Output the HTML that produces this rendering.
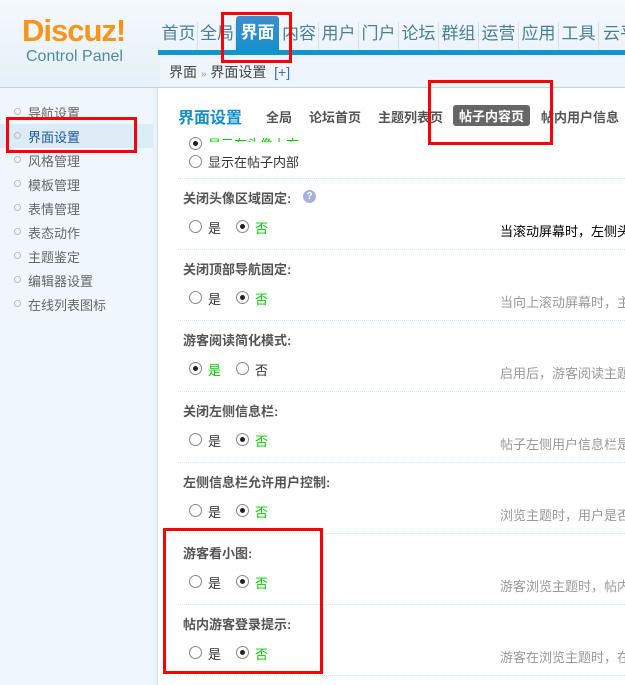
<!DOCTYPE html>
<html><head><meta charset="utf-8"><style>
*{margin:0;padding:0;box-sizing:border-box}
body{width:625px;height:685px;overflow:hidden;position:relative;background:#fff;font-family:"Liberation Sans","Noto Sans CJK SC",sans-serif;font-size:12px;color:#333}
.a{position:absolute;white-space:nowrap}
.hd{left:0;top:0;width:625px;height:88px;background:linear-gradient(#f4f9fd,#e6f0f8)}
.logo{left:22px;top:13px;font-size:31px;font-weight:bold;color:#f7941d;letter-spacing:-1px;font-family:"Liberation Sans",sans-serif}
.cp{left:26px;top:48px;font-size:16px;color:#4f8aa3}
.nav{top:22px;height:28px;font-size:17px;color:#4a7f98;line-height:24px;text-align:center;border-right:1px solid #d2e1ec}
.bar{left:158px;top:50px;width:467px;height:5px;background:#0f97cd}
.bc{left:160px;top:59px;width:465px;height:27px;background:#eef6fc;font-size:14px;color:#444;padding:3px 0 0 9px}
.line{left:0;top:87px;width:625px;height:1px;background:#c3d6e3}
.side{left:0;top:88px;width:153px;height:597px;background:#f0f7fc}
.sb{left:153px;top:88px;width:5px;height:597px;background:#e8f2f9;border-right:1px solid #d0e2ee}
.si{left:28px;font-size:13px;color:#666}
.dot{left:14px;width:7px;height:7px;border:1px solid #bbb;border-radius:50%}
.rb{width:13px;height:13px;border:1px solid #888;border-radius:50%;background:#fff}
.rb.on::after{content:"";position:absolute;left:3px;top:3px;width:5px;height:5px;border-radius:50%;background:#222}
.lbl{left:183px;font-weight:bold;font-size:13px;color:#555}
.sep{left:178px;width:447px;height:0;border-top:1px dotted #d3e3ef}
.desc{left:500px;font-size:13px;color:#999}
.red{position:absolute;border:3px solid #f00}
.tab{top:107px;font-size:13px;font-weight:bold;color:#555}
</style></head><body>
<div class="a hd"></div>
<div class="a logo">Discuz<span style="color:#f7941d">!</span></div>
<div class="a cp">Control Panel</div>
<div class="a nav" style="left:160px;width:38px">首页</div>
<div class="a nav" style="left:199px;width:37px">全局</div>
<div class="a" style="left:236px;top:16px;width:43px;height:34px;background:linear-gradient(#3c8fc9,#1a8fcc);color:#fff;font-size:17px;font-weight:bold;text-align:center;line-height:34px;border-radius:3px 3px 0 0">界面</div>
<div class="a nav" style="left:280px;width:39px">内容</div>
<div class="a nav" style="left:319px;width:40px">用户</div>
<div class="a nav" style="left:359px;width:40px">门户</div>
<div class="a nav" style="left:399px;width:40px">论坛</div>
<div class="a nav" style="left:439px;width:40px">群组</div>
<div class="a nav" style="left:479px;width:40px">运营</div>
<div class="a nav" style="left:519px;width:40px">应用</div>
<div class="a nav" style="left:559px;width:40px">工具</div>
<div class="a nav" style="left:600px;width:40px;border:0">云平</div>
<div class="a bar"></div>
<div class="a bc">界面 <span style="color:#999;font-size:10px">»</span> 界面设置 &nbsp;<span style="color:#3a6fb0">[+]</span></div>
<div class="a line"></div>
<div class="a side"></div>
<div class="a sb"></div>
<div class="a" style="left:0;top:124px;width:153px;height:24px;background:#dcebf6"></div>
<div class="a dot" style="top:108px"></div><div class="a si" style="top:103px">导航设置</div>
<div class="a dot" style="top:132px"></div><div class="a si" style="top:127px;color:#1d5aa0">界面设置</div>
<div class="a dot" style="top:156px"></div><div class="a si" style="top:151px">风格管理</div>
<div class="a dot" style="top:180px"></div><div class="a si" style="top:175px">模板管理</div>
<div class="a dot" style="top:204px"></div><div class="a si" style="top:199px">表情管理</div>
<div class="a dot" style="top:228px"></div><div class="a si" style="top:223px">表态动作</div>
<div class="a dot" style="top:252px"></div><div class="a si" style="top:247px">主题鉴定</div>
<div class="a dot" style="top:276px"></div><div class="a si" style="top:271px">编辑器设置</div>
<div class="a dot" style="top:300px"></div><div class="a si" style="top:295px">在线列表图标</div>
<div class="a" style="left:178px;top:104px;font-size:16px;font-weight:bold;color:#0f8fc7">界面设置</div>
<div class="a tab" style="left:266px">全局</div>
<div class="a tab" style="left:309px">论坛首页</div>
<div class="a tab" style="left:378px">主题列表页</div>
<div class="a tab" style="left:453px;top:105px;background:#666;color:#fff;padding:1px 6px;border-radius:3px">帖子内容页</div>
<div class="a tab" style="left:541px">帖内用户信息</div>
<div class="a rb on" style="left:189px;top:137px"></div><div class="a" style="left:208px;top:134px;color:#0c0;font-size:13px;height:8px;overflow:hidden">显示在头像上方</div>
<div class="a rb" style="left:189px;top:155px"></div><div class="a" style="left:208px;top:152px;font-size:13px">显示在帖子内部</div>
<div class="a sep" style="top:178px"></div>
<div class="a lbl" style="top:188px">关闭头像区域固定:</div>
<div class="a" style="left:303px;top:190px;width:13px;height:13px;border-radius:50%;background:#a8b0e0;color:#fff;font-size:10px;text-align:center;line-height:13px;font-weight:bold">?</div>
<div class="a rb" style="left:189px;top:220px"></div><div class="a" style="left:208px;top:218px;font-size:13px">是</div>
<div class="a rb on" style="left:236px;top:220px"></div><div class="a" style="left:255px;top:218px;font-size:13px;color:#0c0">否</div>
<div class="a" style="left:500px;top:221px;font-size:13px;color:#000">当滚动屏幕时，左侧头像</div>
<div class="a sep" style="top:249px"></div>
<div class="a lbl" style="top:259px">关闭顶部导航固定:</div>
<div class="a rb" style="left:189px;top:291px"></div><div class="a" style="left:208px;top:289px;font-size:13px">是</div>
<div class="a rb on" style="left:236px;top:291px"></div><div class="a" style="left:255px;top:289px;font-size:13px;color:#0c0">否</div>
<div class="a desc" style="top:292px">当向上滚动屏幕时，主导</div>
<div class="a sep" style="top:320px"></div>
<div class="a lbl" style="top:330px">游客阅读简化模式:</div>
<div class="a rb on" style="left:189px;top:362px"></div><div class="a" style="left:208px;top:360px;font-size:13px;color:#0c0">是</div>
<div class="a rb" style="left:236px;top:362px"></div><div class="a" style="left:255px;top:360px;font-size:13px">否</div>
<div class="a desc" style="top:363px">启用后，游客阅读主题时</div>
<div class="a sep" style="top:391px"></div>
<div class="a lbl" style="top:401px">关闭左侧信息栏:</div>
<div class="a rb" style="left:189px;top:433px"></div><div class="a" style="left:208px;top:431px;font-size:13px">是</div>
<div class="a rb on" style="left:236px;top:433px"></div><div class="a" style="left:255px;top:431px;font-size:13px;color:#0c0">否</div>
<div class="a desc" style="top:434px">帖子左侧用户信息栏是否</div>
<div class="a sep" style="top:462px"></div>
<div class="a lbl" style="top:472px">左侧信息栏允许用户控制:</div>
<div class="a rb" style="left:189px;top:504px"></div><div class="a" style="left:208px;top:502px;font-size:13px">是</div>
<div class="a rb on" style="left:236px;top:504px"></div><div class="a" style="left:255px;top:502px;font-size:13px;color:#0c0">否</div>
<div class="a desc" style="top:505px">浏览主题时，用户是否可</div>
<div class="a sep" style="top:533px"></div>
<div class="a lbl" style="top:543px">游客看小图:</div>
<div class="a rb" style="left:189px;top:575px"></div><div class="a" style="left:208px;top:573px;font-size:13px">是</div>
<div class="a rb on" style="left:236px;top:575px"></div><div class="a" style="left:255px;top:573px;font-size:13px;color:#0c0">否</div>
<div class="a desc" style="top:576px">游客浏览主题时，帖内的</div>
<div class="a sep" style="top:604px"></div>
<div class="a lbl" style="top:614px">帖内游客登录提示:</div>
<div class="a rb" style="left:189px;top:646px"></div><div class="a" style="left:208px;top:644px;font-size:13px">是</div>
<div class="a rb on" style="left:236px;top:646px"></div><div class="a" style="left:255px;top:644px;font-size:13px;color:#0c0">否</div>
<div class="a desc" style="top:647px">游客在浏览主题时，在主</div>
<div class="a sep" style="top:675px"></div>
<div class="red" style="left:221px;top:12px;width:71px;height:51px"></div>
<div class="red" style="left:428px;top:80px;width:125px;height:65px"></div>
<div class="red" style="left:6px;top:117px;width:131px;height:36px"></div>
<div class="red" style="left:163px;top:528px;width:160px;height:146px"></div>
</body></html>
